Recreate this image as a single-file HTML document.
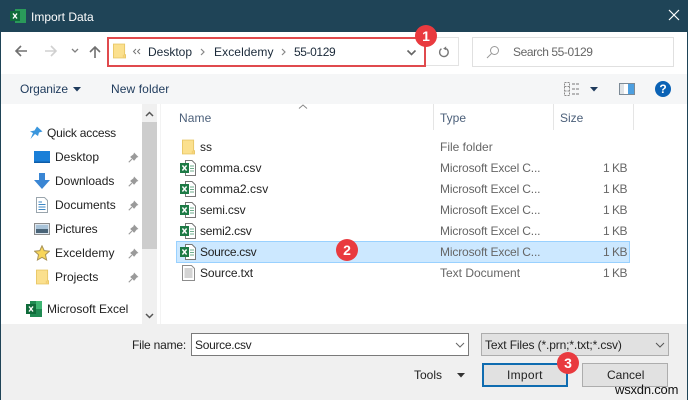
<!DOCTYPE html>
<html><head><meta charset="utf-8"><style>
html,body{margin:0;padding:0}
body{width:688px;height:400px;overflow:hidden;position:relative;background:#fff;font-family:"Liberation Sans",sans-serif;font-size:12px;color:#222}
.a,.t,svg{position:absolute}
.t{height:16px;line-height:16px;white-space:nowrap}
.g{color:#666}
.d{color:#1b2a3a}
.mx{letter-spacing:-.15px}
.kb{letter-spacing:-.5px}
.b{position:absolute;width:22px;height:22px;border-radius:50%;background:#e93a3f;color:#fff;font-weight:bold;font-size:14px;line-height:22px;text-align:center}
</style></head><body>
<svg width="0" height="0" style="position:absolute">
<defs>
<symbol id="folder" viewBox="0 0 14 16"><path d="M.5 .5H12.5V12H13.5V15.5H.5Z" fill="#fbe08e" stroke="#e8c768"/><path d="M12.5 12V15.5H10.5V12Z" fill="#f3cf73"/></symbol>
<symbol id="csv" viewBox="0 0 16 16"><path d="M5.5 .5H12L15.5 4V15.5H5.5Z" fill="#fff" stroke="#777"/><path d="M10 6H14M10 8.5H14M10 11H14" stroke="#6fae8c"/><rect x="0" y="3" width="9" height="10" fill="#1d7a45"/><path d="M2.4 5.5L6.6 10.5M6.6 5.5L2.4 10.5" stroke="#fff" stroke-width="1.4"/></symbol>
<symbol id="pin" viewBox="0 0 10 10"><path d="M5.5 .5L9.5 4.5L8 5L6 7.5L5.5 8L2 4.5L2.5 4L5 2Z" fill="#9a9a9a"/><path d="M3.5 6.5L.7 9.3" stroke="#9a9a9a"/></symbol>
</defs></svg>

<!-- title bar -->
<div class="a" style="left:0;top:0;width:688px;height:32px;background:#1f4457"></div>
<div class="a" style="left:0;top:0;width:1px;height:400px;background:#1f4457"></div>
<div class="a" style="left:687px;top:0;width:1px;height:400px;background:#1f4457"></div>
<svg style="left:10px;top:8px" width="16" height="16" viewBox="0 0 16 16"><rect x="5" y="1" width="11" height="14" fill="#2a9a5a"/><rect x="0" y="3" width="10" height="10" fill="#0f6b3a"/><path d="M3 5.5L7 10.5M7 5.5L3 10.5" stroke="#fff" stroke-width="1.4"/></svg>
<div class="t" style="left:31px;top:9px;color:#fff">Import Data</div>
<svg style="left:666px;top:7px" width="16" height="16" viewBox="0 0 16 16"><path d="M3 3L13 13M13 3L3 13" stroke="#fff" stroke-width="1.2"/></svg>

<!-- nav -->
<svg style="left:14px;top:44px" width="14" height="14" viewBox="0 0 14 14"><path d="M13 7H2M7 2L2 7L7 12" fill="none" stroke="#707070" stroke-width="1.6"/></svg>
<svg style="left:44px;top:44px" width="14" height="14" viewBox="0 0 14 14"><path d="M1 7H12M7 2L12 7L7 12" fill="none" stroke="#d0d0d0" stroke-width="1.6"/></svg>
<svg style="left:71px;top:48px" width="8" height="6" viewBox="0 0 8 6"><path d="M1 1L4 4L7 1" fill="none" stroke="#808080" stroke-width="1.3"/></svg>
<svg style="left:88px;top:45px" width="14" height="14" viewBox="0 0 14 14"><path d="M7 13V2M2 7L7 2L12 7" fill="none" stroke="#707070" stroke-width="1.6"/></svg>

<!-- address -->
<div class="a" style="left:107px;top:37px;width:317px;height:28px;border:1px solid #e04a4d;outline:1px solid #e04a4d;outline-offset:-2px"></div>
<svg style="left:113px;top:43px" width="13" height="16"><use href="#folder"/></svg>
<svg style="left:132px;top:48px" width="9" height="7" viewBox="0 0 9 7"><path d="M4 1L1.5 3.5L4 6M8 1L5.5 3.5L8 6" fill="none" stroke="#777"/></svg>
<div class="t d" style="left:148px;top:44px">Desktop</div>
<svg style="left:200px;top:48px" width="5" height="8" viewBox="0 0 5 8"><path d="M1 1L4 4L1 7" fill="none" stroke="#888" stroke-width="1.2"/></svg>
<div class="t d" style="left:214px;top:44px;letter-spacing:.1px">Exceldemy</div>
<svg style="left:281px;top:48px" width="5" height="8" viewBox="0 0 5 8"><path d="M1 1L4 4L1 7" fill="none" stroke="#888" stroke-width="1.2"/></svg>
<div class="t d" style="left:294px;top:44px;letter-spacing:-.4px">55-0129</div>
<svg style="left:406px;top:49px" width="11" height="8" viewBox="0 0 11 8"><path d="M1.5 1.5L5.5 5.5L9.5 1.5" fill="none" stroke="#666" stroke-width="1.6"/></svg>

<!-- refresh -->
<div class="a" style="left:426px;top:37px;width:33px;height:29px;border:1px solid #e3e3e3;border-left:none;box-sizing:border-box"></div>
<svg style="left:438px;top:46px" width="12" height="12" viewBox="0 0 14 14"><path d="M4 3.2A5 5 0 1 0 9.5 3" fill="none" stroke="#777" stroke-width="1.6"/><path d="M6.5 .5V5L3 3Z" fill="#777" transform="translate(3 0)"/></svg>

<!-- search -->
<div class="a" style="left:472px;top:37px;width:202px;height:30px;border:1px solid #e0e0e0;box-sizing:border-box"></div>
<svg style="left:486px;top:45px" width="14" height="14" viewBox="0 0 14 14"><circle cx="8.5" cy="5.5" r="4" fill="none" stroke="#999"/><path d="M5.5 8.5L1 13" stroke="#999"/></svg>
<div class="t g" style="left:513px;top:44px;letter-spacing:-.42px">Search 55-0129</div>

<!-- toolbar -->
<div class="a" style="left:1px;top:74px;width:686px;height:30px;background:#f5f6f7"></div>
<div class="t" style="left:20px;top:81px;color:#1e3a5c;letter-spacing:-.1px">Organize</div>
<svg style="left:73px;top:87px" width="9" height="5"><path d="M0 0H8L4 4.5Z" fill="#1e3a5c"/></svg>
<div class="t" style="left:111px;top:81px;color:#1e3a5c;letter-spacing:.1px">New folder</div>
<svg style="left:564px;top:82px" width="17" height="14" viewBox="0 0 17 14"><path d="M.5 .5H5.5V13.5H.5ZM.5 4.5H5.5M.5 9H5.5" fill="#f5f6f7" stroke="#8a8a8a" stroke-dasharray="2 1"/><path d="M8 2H16M8 7H16M8 12H16" stroke="#777" stroke-dasharray="3 1"/></svg>
<svg style="left:590px;top:87px" width="9" height="5"><path d="M0 0H8L4 4.5Z" fill="#1e3a5c"/></svg>
<svg style="left:619px;top:83px" width="16" height="12" viewBox="0 0 16 12"><rect x=".5" y=".5" width="15" height="11" fill="#fff" stroke="#7c8a96"/><rect x="1" y="1" width="4" height="10" fill="#dfe3e6"/><rect x="9" y="1" width="6" height="10" fill="#4d9fe0"/></svg>
<div class="a" style="left:655px;top:81px;width:16px;height:16px;border-radius:50%;background:#0a62b5;color:#fff;font-weight:bold;font-size:12px;line-height:16px;text-align:center">?</div>

<!-- sidebar scrollbar -->
<div class="a" style="left:142px;top:104px;width:15px;height:220px;background:#f0f0f0"></div>
<div class="a" style="left:142px;top:122px;width:15px;height:127px;background:#cdcdcd"></div>
<svg style="left:145px;top:111px" width="9" height="6" viewBox="0 0 9 6"><path d="M1 5L4.5 1.5L8 5" fill="none" stroke="#555" stroke-width="1.5"/></svg>
<svg style="left:145px;top:313px" width="9" height="6" viewBox="0 0 9 6"><path d="M1 1L4.5 4.5L8 1" fill="none" stroke="#555" stroke-width="1.5"/></svg>
<div class="a" style="left:160px;top:104px;width:1px;height:220px;background:#f3f3f3"></div>

<!-- sidebar items -->
<svg style="left:28px;top:126px" width="15" height="14" viewBox="0 0 15 14"><path d="M9 .5L14.5 5.5L11 6.5L10 10L7 8L2.5 13L5 7L2 5.5L6.5 4.5Z" fill="#3a96dd"/></svg>
<div class="t" style="left:47px;top:125px;letter-spacing:-.2px">Quick access</div>
<svg style="left:34px;top:151px" width="16" height="12" viewBox="0 0 16 12"><rect width="16" height="12" fill="#1a7fd8"/><rect x="0" y="10.5" width="16" height="1.5" fill="#0d5ca8"/></svg>
<div class="t" style="left:55px;top:149px">Desktop</div>
<svg style="left:34px;top:173px" width="16" height="16" viewBox="0 0 16 16"><path d="M5 0H11V7H16L8 16L0 7H5Z" fill="#3a86d4"/></svg>
<div class="t" style="left:55px;top:173px">Downloads</div>
<svg style="left:36px;top:197px" width="12" height="16" viewBox="0 0 12 16"><path d="M.5 .5H8.5L11.5 3.5V15.5H.5Z" fill="#fff" stroke="#9aa5ad"/><path d="M2.5 5H6M2.5 7.5H9.5M2.5 10H9.5M2.5 12.5H9.5" stroke="#3d87c4"/></svg>
<div class="t" style="left:55px;top:197px">Documents</div>
<svg style="left:34px;top:223px" width="16" height="12" viewBox="0 0 16 12"><rect x=".5" y=".5" width="15" height="11" fill="#dde6ee" stroke="#8c8c8c"/><rect x="2" y="2" width="12" height="4" fill="#a9c3d8"/><rect x="2" y="6" width="12" height="4" fill="#4a6478"/></svg>
<div class="t" style="left:55px;top:221px;letter-spacing:-.1px">Pictures</div>
<svg style="left:34px;top:245px" width="16" height="16" viewBox="0 0 16 16"><path d="M8 .8L10.2 5.6L15.4 6.2L11.5 9.7L12.6 15L8 12.3L3.4 15L4.5 9.7L.6 6.2L5.8 5.6Z" fill="#f8d65a" stroke="#a89356"/></svg>
<div class="t" style="left:55px;top:245px;letter-spacing:.1px">Exceldemy</div>
<svg style="left:36px;top:269px" width="13" height="16"><use href="#folder"/></svg>
<div class="t" style="left:55px;top:269px">Projects</div>
<svg style="left:128px;top:152px" width="11" height="11"><use href="#pin"/></svg>
<svg style="left:128px;top:176px" width="11" height="11"><use href="#pin"/></svg>
<svg style="left:128px;top:200px" width="11" height="11"><use href="#pin"/></svg>
<svg style="left:128px;top:224px" width="11" height="11"><use href="#pin"/></svg>
<svg style="left:128px;top:248px" width="11" height="11"><use href="#pin"/></svg>
<svg style="left:128px;top:272px" width="11" height="11"><use href="#pin"/></svg>
<svg style="left:26px;top:301px" width="16" height="16" viewBox="0 0 16 16"><rect x="4" y="0" width="12" height="16" fill="#1f8a52"/><rect x="10" y="0" width="6" height="8" fill="#3fb573"/><rect x="0" y="3" width="10" height="10" fill="#0f6b3a"/><path d="M3 5.5L7 10.5M7 5.5L3 10.5" stroke="#fff" stroke-width="1.4"/></svg>
<div class="t" style="left:47px;top:301px">Microsoft Excel</div>

<!-- list header -->
<svg style="left:298px;top:104px" width="10" height="5" viewBox="0 0 10 5"><path d="M1 4.5L5 1L9 4.5" fill="none" stroke="#888"/></svg>
<div class="t" style="left:179px;top:110px;color:#4c607a;letter-spacing:.1px">Name</div>
<div class="t" style="left:440px;top:110px;color:#4c607a">Type</div>
<div class="t" style="left:560px;top:110px;color:#4c607a">Size</div>
<div class="a" style="left:433px;top:104px;width:1px;height:26px;background:#e5e5e5"></div>
<div class="a" style="left:553px;top:104px;width:1px;height:26px;background:#e5e5e5"></div>
<div class="a" style="left:633px;top:104px;width:1px;height:26px;background:#e5e5e5"></div>

<!-- selected row -->
<div class="a" style="left:176px;top:241px;width:454px;height:22px;box-sizing:border-box;background:#cce8ff;border:1px solid #99d1ff"></div>

<!-- rows -->
<svg style="left:182px;top:139px" width="13" height="16"><use href="#folder"/></svg>
<div class="t" style="left:200px;top:139px">ss</div>
<div class="t g" style="left:440px;top:139px">File folder</div>

<svg style="left:180px;top:160px" width="16" height="16"><use href="#csv"/></svg>
<div class="t" style="left:200px;top:160px;letter-spacing:.1px">comma.csv</div>
<div class="t g mx" style="left:440px;top:160px">Microsoft Excel C...</div>
<div class="t g kb" style="left:603px;top:160px">1 KB</div>

<svg style="left:180px;top:181px" width="16" height="16"><use href="#csv"/></svg>
<div class="t" style="left:200px;top:181px;letter-spacing:.1px">comma2.csv</div>
<div class="t g mx" style="left:440px;top:181px">Microsoft Excel C...</div>
<div class="t g kb" style="left:603px;top:181px">1 KB</div>

<svg style="left:180px;top:202px" width="16" height="16"><use href="#csv"/></svg>
<div class="t" style="left:200px;top:202px;letter-spacing:-.15px">semi.csv</div>
<div class="t g mx" style="left:440px;top:202px">Microsoft Excel C...</div>
<div class="t g kb" style="left:603px;top:202px">1 KB</div>

<svg style="left:180px;top:223px" width="16" height="16"><use href="#csv"/></svg>
<div class="t" style="left:200px;top:223px;letter-spacing:-.2px">semi2.csv</div>
<div class="t g mx" style="left:440px;top:223px">Microsoft Excel C...</div>
<div class="t g kb" style="left:603px;top:223px">1 KB</div>

<svg style="left:180px;top:244px" width="16" height="16"><use href="#csv"/></svg>
<div class="t" style="left:200px;top:244px;letter-spacing:-.3px">Source.csv</div>
<div class="t g mx" style="left:440px;top:244px">Microsoft Excel C...</div>
<div class="t g kb" style="left:603px;top:244px">1 KB</div>

<svg style="left:182px;top:265px" width="13" height="16" viewBox="0 0 13 16"><path d="M.5 .5H9.5L12.5 3.5V15.5H.5Z" fill="#fff" stroke="#8c8c8c"/><path d="M2.5 4H10.5M2.5 6H10.5M2.5 8H10.5M2.5 10H10.5M2.5 12H10.5" stroke="#a8a8a8"/></svg>
<div class="t" style="left:200px;top:265px;letter-spacing:-.1px">Source.txt</div>
<div class="t g" style="left:440px;top:265px">Text Document</div>
<div class="t g kb" style="left:603px;top:265px">1 KB</div>

<!-- bottom panel -->
<div class="a" style="left:1px;top:324px;width:686px;height:76px;background:#f0f0f0"></div>
<div class="t" style="left:132px;top:337px;color:#222;letter-spacing:-.2px">File name:</div>
<div class="a" style="left:191px;top:333px;width:278px;height:23px;box-sizing:border-box;background:#fff;border:1px solid #7a7a7a"></div>
<div class="t" style="left:195px;top:337px;letter-spacing:-.3px">Source.csv</div>
<svg style="left:455px;top:342px" width="10" height="6" viewBox="0 0 10 6"><path d="M1 1L5 5L9 1" fill="none" stroke="#666"/></svg>
<div class="a" style="left:481px;top:333px;width:188px;height:23px;box-sizing:border-box;background:#e1e1e1;border:1px solid #adadad"></div>
<div class="t" style="left:485px;top:337px;letter-spacing:-.13px">Text Files (*.prn;*.txt;*.csv)</div>
<svg style="left:655px;top:342px" width="10" height="6" viewBox="0 0 10 6"><path d="M1 1L5 5L9 1" fill="none" stroke="#555"/></svg>
<div class="t" style="left:414px;top:367px">Tools</div>
<svg style="left:457px;top:373px" width="9" height="5"><path d="M0 0H8L4 4.5Z" fill="#333"/></svg>
<div class="a" style="left:482px;top:363px;width:86px;height:24px;box-sizing:border-box;background:#e1e1e1;border:2px solid #0f6cb0"></div>
<div class="t" style="left:507px;top:367px;letter-spacing:.3px">Import</div>
<div class="a" style="left:582px;top:363px;width:86px;height:24px;box-sizing:border-box;background:#e1e1e1;border:1px solid #adadad"></div>
<div class="t" style="left:607px;top:367px">Cancel</div>

<!-- badges -->
<div class="b" style="left:415px;top:25px">1</div>
<div class="b" style="left:336px;top:239px">2</div>
<div class="b" style="left:557px;top:352px">3</div>

<!-- watermark -->
<div class="t" style="left:615px;top:382px;font-size:13px;color:#111;letter-spacing:-.2px">wsxdn.com</div>
</body></html>
